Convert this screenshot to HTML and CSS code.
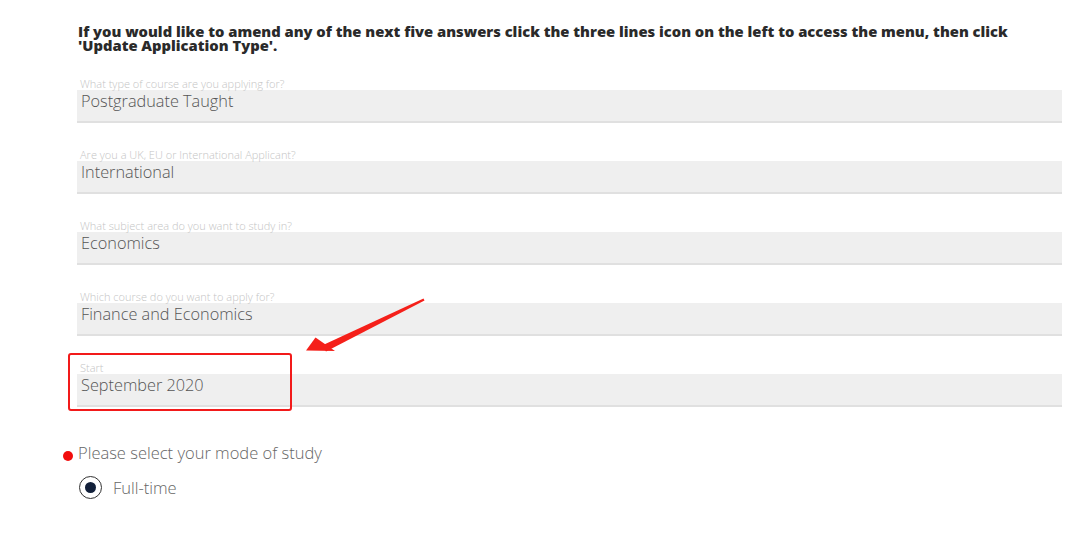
FILE: index.html
```html
<!DOCTYPE html>
<html>
<head>
<meta charset="utf-8">
<link rel="stylesheet" href="styles.css">
</head>
<body>
<div class="page">
  <p class="intro">If you would like to amend any of the next five answers click the three lines icon on the left to access the menu, then click 'Update Application Type'.</p>

  <div class="field">
    <div class="label">What type of course are you applying for?</div>
    <div class="value">Postgraduate Taught</div>
  </div>
  <div class="field">
    <div class="label">Are you a UK, EU or International Applicant?</div>
    <div class="value">International</div>
  </div>
  <div class="field">
    <div class="label">What subject area do you want to study in?</div>
    <div class="value">Economics</div>
  </div>
  <div class="field">
    <div class="label">Which course do you want to apply for?</div>
    <div class="value">Finance and Economics</div>
  </div>
  <div class="field">
    <div class="label">Start</div>
    <div class="value">September 2020</div>
  </div>

  <div class="question"><span class="req"></span>Please select your mode of study</div>
  <label class="radio"><span class="circle"><span class="dot"></span></span>Full-time</label>

  <div class="highlight"></div>
  <svg class="arrow" width="140" height="70" viewBox="0 0 140 70">
    <path d="M133.5 8.5 L32 55.5 L36 61.5 L134.5 10.5 Z" fill="#f5201a"/>
    <path d="M16 60.5 L25.5 47.5 L45 61 Z" fill="#f5201a"/>
  </svg>
</div>
</body>
</html>
```
FILE: styles.css
```css
html, body {
  margin: 0;
  padding: 0;
  background: #fff;
}
.page {
  position: relative;
  width: 1080px;
  height: 541px;
  padding: 24px 18px 0 77px;
  box-sizing: border-box;
  font-family: "Open Sans", "Noto Sans", sans-serif;
}
.intro {
  margin: 0 0 25px 1px;
  width: 960px;
  font-size: 14.75px;
  line-height: 14px;
  font-weight: 800;
  color: #2a2a2a;
}
.field {
  margin-bottom: 25px;
  width: 985px;
}
.label {
  font-size: 11px;
  line-height: 13px;
  font-weight: 300;
  color: #c4c4c4;
  padding-left: 3px;
}
.value {
  height: 31px;
  background: #efefef;
  border-bottom: 2px solid #e0e0e0;
  font-size: 16.3px;
  line-height: 23px;
  font-weight: 300;
  color: #555;
  padding-left: 4px;
}
.question {
  position: relative;
  margin-top: 35px;
  margin-left: 1px;
  font-size: 16.5px;
  line-height: 22px;
  font-weight: 300;
  color: #666;
}
.req {
  position: absolute;
  left: -15px;
  top: 9px;
  width: 10px;
  height: 10px;
  border-radius: 50%;
  background: #f20d0d;
}
.radio {
  display: flex;
  align-items: center;
  gap: 11px;
  margin-top: 12px;
  margin-left: 2px;
  font-size: 16.5px;
  font-weight: 300;
  color: #666;
}
.circle {
  display: flex;
  align-items: center;
  justify-content: center;
  width: 21px;
  height: 21px;
  border: 1.5px solid #333;
  border-radius: 50%;
}
.dot {
  width: 11px;
  height: 11px;
  border-radius: 50%;
  background: #12203a;
}
.highlight {
  position: absolute;
  left: 68px;
  top: 353px;
  width: 220px;
  height: 54px;
  border: 2px solid #f21a1a;
  border-radius: 3px;
}
.arrow {
  position: absolute;
  left: 290px;
  top: 290px;
}
```
